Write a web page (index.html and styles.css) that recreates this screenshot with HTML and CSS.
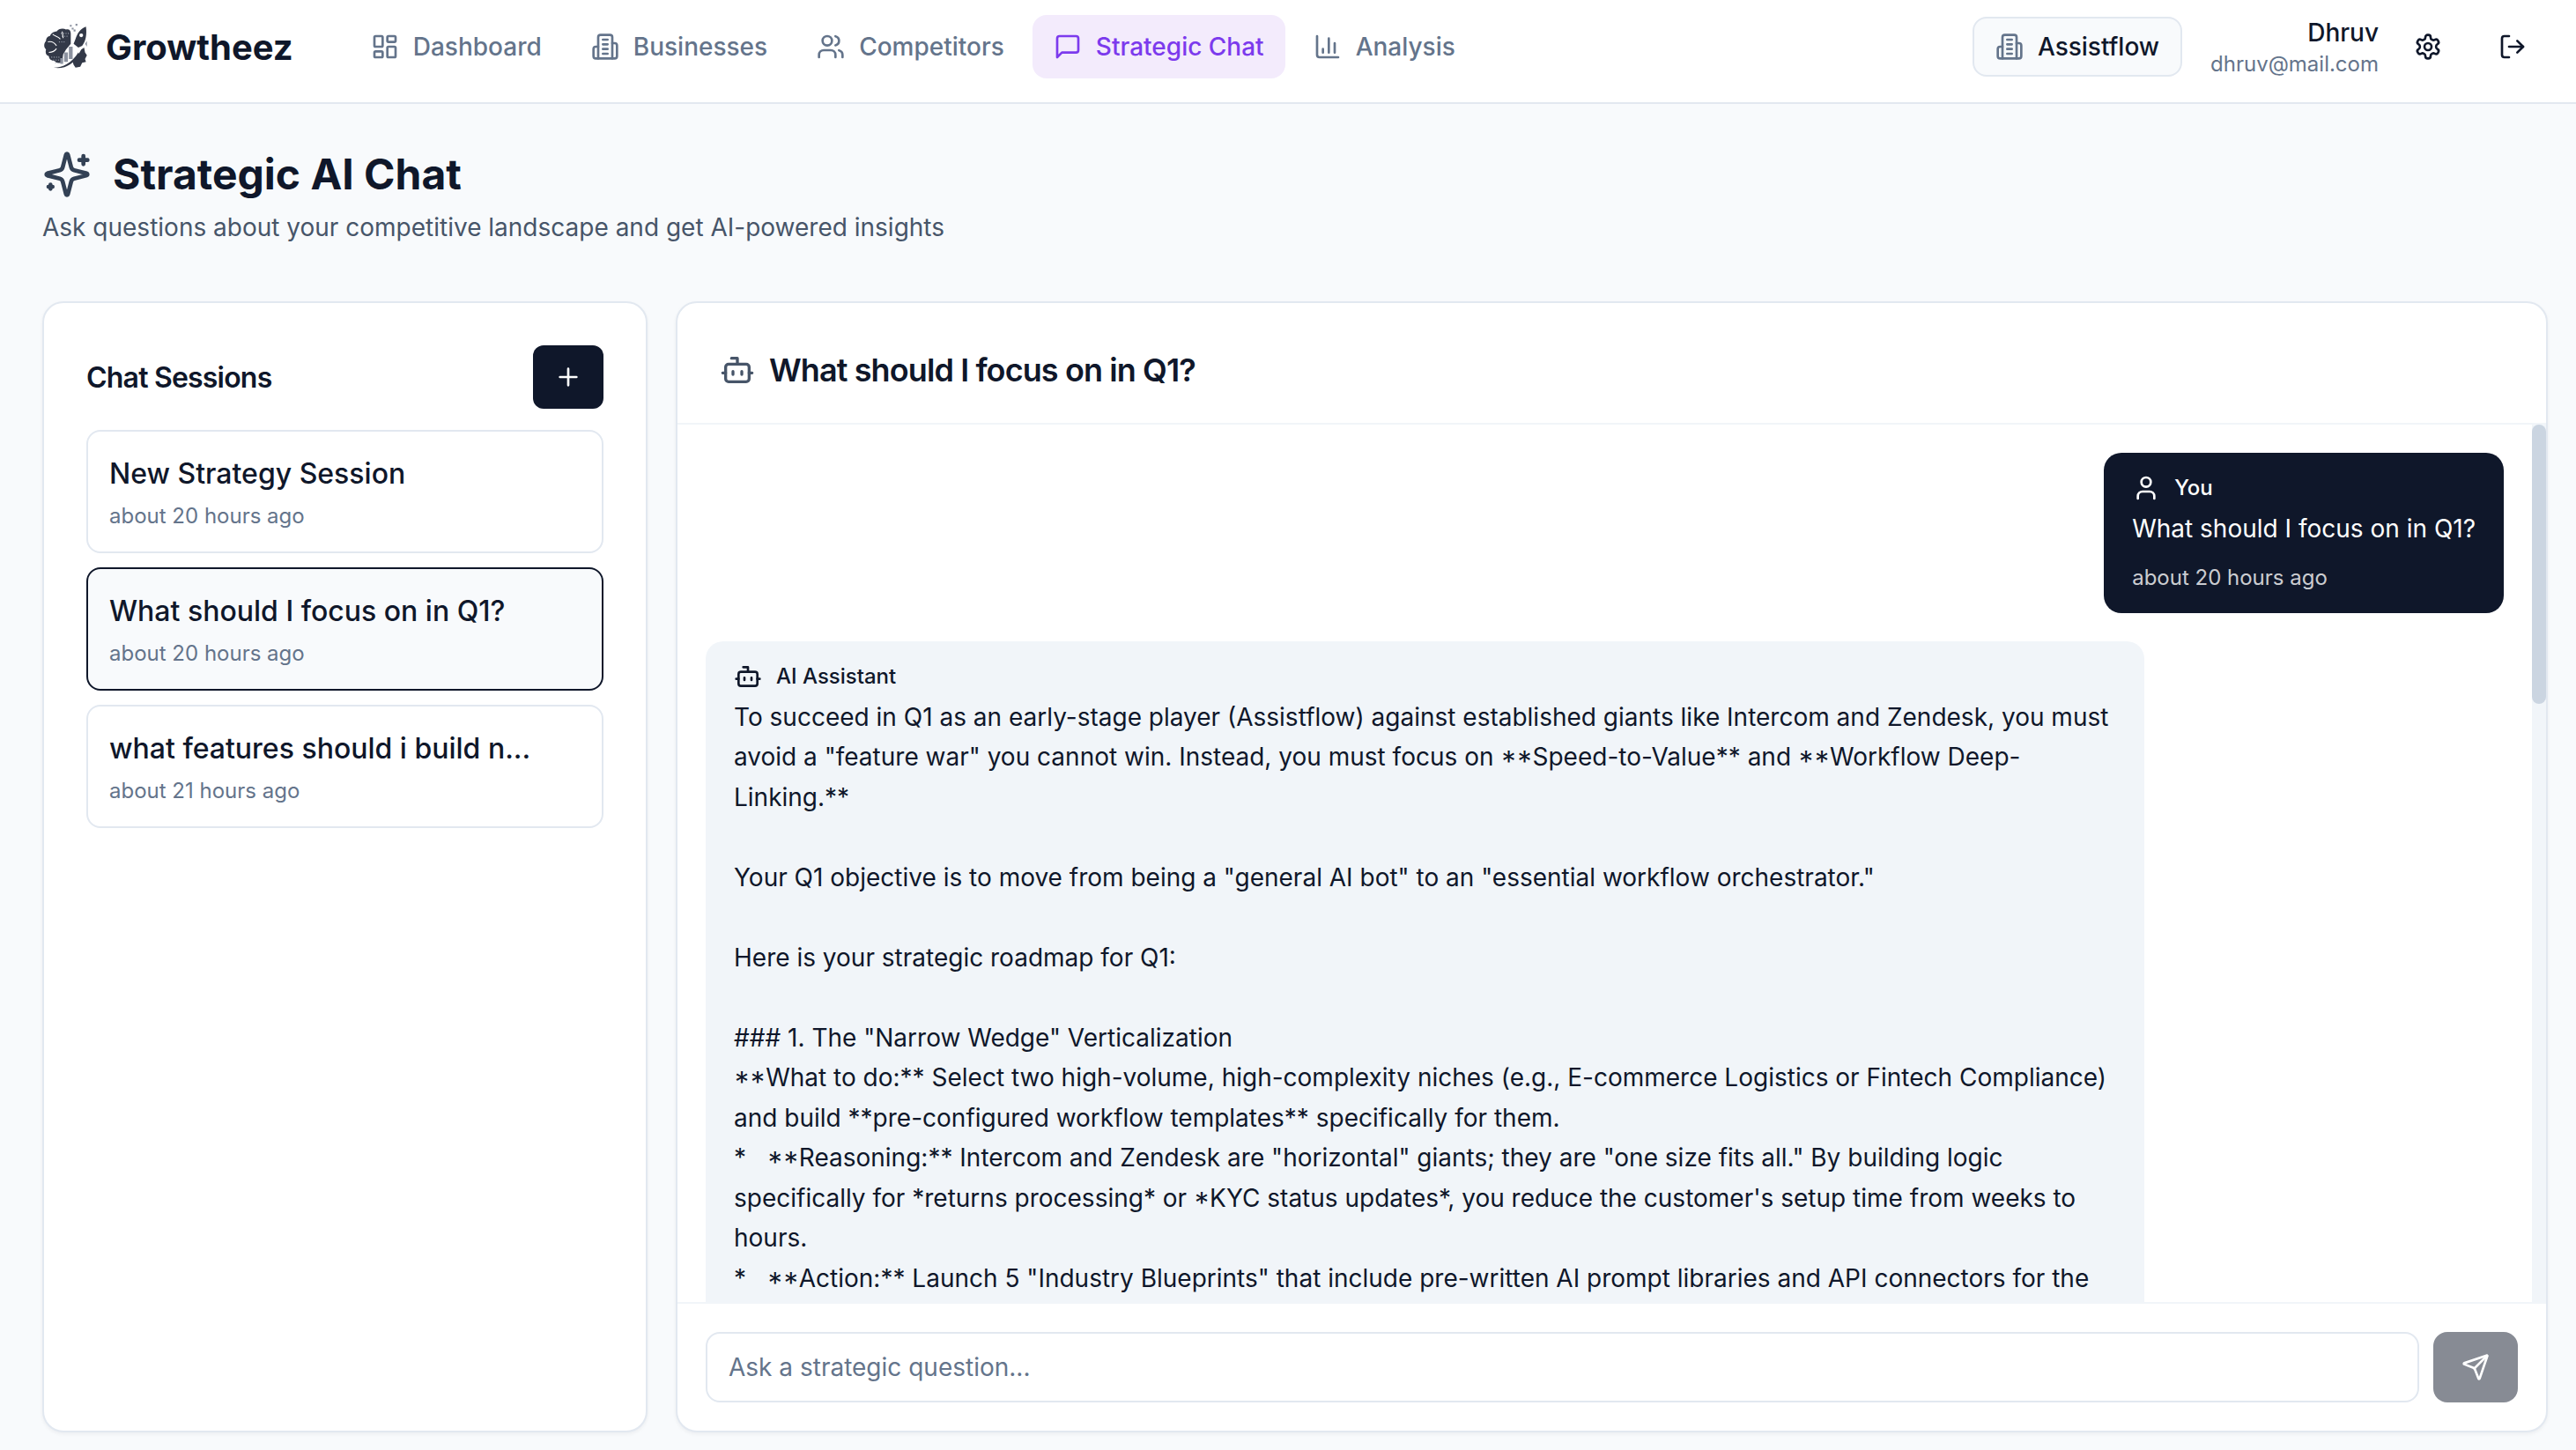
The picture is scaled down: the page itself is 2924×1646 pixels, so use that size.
FILE: index.html
```html
<!DOCTYPE html>
<html lang="en">
<head>
  <meta charset="UTF-8">
  <title>Growtheez - Strategic AI Chat</title>
  <link rel="stylesheet" href="styles.css">
</head>
<body>
  <header class="topbar">
    <div class="brand">
      <svg class="brand-mark" viewBox="0 0 48 50">
        <!-- brain -->
        <path fill="#333948" d="M13 9c2-3 7-4 10-2 3-1 5 1 5 4v11l-5 6-3 5-1 8c-3 2-6 1-8-1-3 0-6-2-6-5-3-1-4-4-3-7-3-3-2-7 0-9 0-3 2-5 4-5 1-3 4-5 7-5z"/>
        <path fill="none" stroke="#fff" stroke-width="1" d="M4 20c4-1 7 1 9 4M9 12c2 2 6 2 8 5M5 31c3 0 6-1 8-4M19 9l1 7"/>
        <path fill="none" stroke="#aab0bc" stroke-width="1" stroke-linecap="round" stroke-dasharray="0.1 2.4" d="M18 11h8M19 14h7M8 36h8M10 39h7M12 42h6M16 20h6"/>
        <!-- bars -->
        <path fill="#8c92a0" d="M17 37h3v6h-3zM21 31h4v10h-4zM26 25h4v13h-4z"/>
        <!-- swoosh -->
        <path fill="#333948" d="M10 47c10 0 19-5 26-16l1 2c-6 10-15 16-27 14z"/>
        <!-- rocket and gear -->
        <path fill="#333948" d="M44 4c-6 2-9 7-11 13l-2 5 5 4 4-2c4-5 5-12 4-20z"/>
        <path fill="#333948" d="M39 28l3-2 1 5 2 3-2 4 1 3-4 1-2 4-5 1-2-3-1-3 5-6z"/>
        <circle cx="39" cy="13" r="2" fill="#fff"/>
        <path fill="#8c92a0" d="M31 7h2v2h-2zM33 1h2v2h-2zM27 2h2v2h-2zM29 5h2v2h-2zM43 22l2-3v6z"/>
      </svg>
      <span class="brand-name">Growtheez</span>
    </div>
    <nav class="nav">
      <a class="nav-item">
        <svg class="icon" viewBox="0 0 24 24"><rect x="3" y="3" width="7" height="9" rx="1"/><rect x="14" y="3" width="7" height="5" rx="1"/><rect x="14" y="12" width="7" height="9" rx="1"/><rect x="3" y="16" width="7" height="5" rx="1"/></svg>
        Dashboard
      </a>
      <a class="nav-item">
        <svg class="icon" viewBox="0 0 24 24"><path d="M6 22V4a2 2 0 0 1 2-2h8a2 2 0 0 1 2 2v18Z"/><path d="M6 12H4a2 2 0 0 0-2 2v6a2 2 0 0 0 2 2h2"/><path d="M18 9h2a2 2 0 0 1 2 2v9a2 2 0 0 1-2 2h-2"/><path d="M10 6h4M10 10h4M10 14h4M10 18h4"/></svg>
        Businesses
      </a>
      <a class="nav-item">
        <svg class="icon" viewBox="0 0 24 24"><path d="M16 21v-2a4 4 0 0 0-4-4H6a4 4 0 0 0-4 4v2"/><circle cx="9" cy="7" r="4"/><path d="M22 21v-2a4 4 0 0 0-3-3.87"/><path d="M16 3.13a4 4 0 0 1 0 7.75"/></svg>
        Competitors
      </a>
      <a class="nav-item active">
        <svg class="icon" viewBox="0 0 24 24"><path d="M21 15a2 2 0 0 1-2 2H7l-4 4V5a2 2 0 0 1 2-2h14a2 2 0 0 1 2 2z"/></svg>
        Strategic Chat
      </a>
      <a class="nav-item">
        <svg class="icon" viewBox="0 0 24 24"><path d="M3 3v16a2 2 0 0 0 2 2h16"/><path d="M18 17V9M13 17V5M8 17v-3"/></svg>
        Analysis
      </a>
    </nav>
    <div class="account">
      <button class="workspace">
        <svg class="icon muted" viewBox="0 0 24 24"><path d="M6 22V4a2 2 0 0 1 2-2h8a2 2 0 0 1 2 2v18Z"/><path d="M6 12H4a2 2 0 0 0-2 2v6a2 2 0 0 0 2 2h2"/><path d="M18 9h2a2 2 0 0 1 2 2v9a2 2 0 0 1-2 2h-2"/><path d="M10 6h4M10 10h4M10 14h4M10 18h4"/></svg>
        Assistflow
      </button>
      <div class="user">
        <div class="user-name">Dhruv</div>
        <div class="user-mail">dhruv@mail.com</div>
      </div>
      <div class="account-actions">
        <button class="icon-btn">
          <svg class="icon" viewBox="0 0 24 24"><path d="M12.22 2h-.44a2 2 0 0 0-2 2v.18a2 2 0 0 1-1 1.73l-.43.25a2 2 0 0 1-2 0l-.15-.08a2 2 0 0 0-2.73.73l-.22.38a2 2 0 0 0 .73 2.73l.15.1a2 2 0 0 1 1 1.72v.51a2 2 0 0 1-1 1.74l-.15.09a2 2 0 0 0-.73 2.73l.22.38a2 2 0 0 0 2.73.73l.15-.08a2 2 0 0 1 2 0l.43.25a2 2 0 0 1 1 1.73V20a2 2 0 0 0 2 2h.44a2 2 0 0 0 2-2v-.18a2 2 0 0 1 1-1.73l.43-.25a2 2 0 0 1 2 0l.15.08a2 2 0 0 0 2.73-.73l.22-.39a2 2 0 0 0-.73-2.73l-.15-.08a2 2 0 0 1-1-1.74v-.5a2 2 0 0 1 1-1.74l.15-.09a2 2 0 0 0 .73-2.73l-.22-.38a2 2 0 0 0-2.73-.73l-.15.08a2 2 0 0 1-2 0l-.43-.25a2 2 0 0 1-1-1.73V4a2 2 0 0 0-2-2z"/><circle cx="12" cy="12" r="3"/></svg>
        </button>
        <button class="icon-btn">
          <svg class="icon" viewBox="0 0 24 24"><path d="M9 21H5a2 2 0 0 1-2-2V5a2 2 0 0 1 2-2h4"/><path d="M16 17l5-5-5-5"/><path d="M21 12H9"/></svg>
        </button>
      </div>
    </div>
  </header>

  <main class="page">
    <h1 class="page-title">
      <svg class="icon title-icon" viewBox="0 0 24 24"><path d="M9.937 15.5A2 2 0 0 0 8.5 14.063l-6.135-1.582a.5.5 0 0 1 0-.962L8.5 9.936A2 2 0 0 0 9.937 8.5l1.582-6.135a.5.5 0 0 1 .963 0L14.063 8.5A2 2 0 0 0 15.5 9.937l6.135 1.581a.5.5 0 0 1 0 .964L15.5 14.063a2 2 0 0 0-1.437 1.437l-1.582 6.135a.5.5 0 0 1-.963 0z"/><path d="M20 3v4M22 5h-4M4 17v2M5 18H3"/></svg>
      Strategic AI Chat
    </h1>
    <p class="page-sub">Ask questions about your competitive landscape and get AI-powered insights</p>

    <div class="columns">
      <aside class="card sessions">
        <div class="sessions-head">
          <h2>Chat Sessions</h2>
          <button class="add-btn">
            <svg class="icon" viewBox="0 0 24 24"><path d="M5 12h14M12 5v14"/></svg>
          </button>
        </div>
        <div class="session">
          <div class="session-title">New Strategy Session</div>
          <div class="session-time">about 20 hours ago</div>
        </div>
        <div class="session selected">
          <div class="session-title">What should I focus on in Q1?</div>
          <div class="session-time">about 20 hours ago</div>
        </div>
        <div class="session">
          <div class="session-title">what features should i build n...</div>
          <div class="session-time">about 21 hours ago</div>
        </div>
      </aside>

      <section class="card chat">
        <div class="chat-head">
          <svg class="icon chat-head-icon" viewBox="0 0 24 24"><path d="M12 8V4H8"/><rect x="4" y="8" width="16" height="12" rx="2"/><path d="M2 14h2M20 14h2M15 13v2M9 13v2"/></svg>
          <h2>What should I focus on in Q1?</h2>
        </div>
        <div class="chat-body">
          <div class="messages">
            <div class="msg msg-user">
              <div class="msg-who">
                <svg class="icon" viewBox="0 0 24 24"><path d="M19 21v-2a4 4 0 0 0-4-4H9a4 4 0 0 0-4 4v2"/><circle cx="12" cy="7" r="4"/></svg>
                You
              </div>
              <div class="msg-text">What should I focus on in Q1?</div>
              <div class="msg-time">about 20 hours ago</div>
            </div>
            <div class="msg msg-ai">
              <div class="msg-who">
                <svg class="icon" viewBox="0 0 24 24"><path d="M12 8V4H8"/><rect x="4" y="8" width="16" height="12" rx="2"/><path d="M2 14h2M20 14h2M15 13v2M9 13v2"/></svg>
                AI Assistant
              </div>
              <div class="msg-text">To succeed in Q1 as an early-stage player (Assistflow) against established giants like Intercom and Zendesk, you must avoid a "feature war" you cannot win. Instead, you must focus on <span class="caps-mark">**</span>Speed-to-Value** and <span class="caps-mark">**</span>Workflow Deep-Linking.**

Your Q1 objective is to move from being a "general AI bot" to an "essential workflow orchestrator."

Here is your strategic roadmap for Q1:

### 1. The "Narrow Wedge" Verticalization
<span class="caps-mark">**</span>What to do:** Select two high-volume, high-complexity niches (e.g., E-commerce Logistics or Fintech Compliance) and build **pre-configured workflow templates** specifically for them.
*   <span class="caps-mark">**</span>Reasoning:** Intercom and Zendesk are "horizontal" giants; they are "one size fits all." By building logic specifically for *returns processing* or <span class="caps-mark">*</span>KYC status updates*, you reduce the customer's setup time from weeks to hours.
*   <span class="caps-mark">**</span>Action:** Launch 5 "Industry Blueprints" that include pre-written AI prompt libraries and API connectors for the</div>
            </div>
          </div>
          <div class="scroll-track"><div class="scroll-thumb"></div></div>
        </div>
        <form class="composer">
          <input class="composer-input" type="text" placeholder="Ask a strategic question...">
          <button class="send-btn" type="button">
            <svg class="icon" viewBox="0 0 24 24"><path d="M14.536 21.686a.5.5 0 0 0 .937-.024l6.5-19a.496.496 0 0 0-.635-.635l-19 6.5a.5.5 0 0 0-.024.937l7.93 3.18a2 2 0 0 1 1.112 1.11z"/><path d="m21.854 2.147-10.94 10.939"/></svg>
          </button>
        </form>
      </section>
    </div>
  </main>
</body>
</html>
```

FILE: styles.css
```css
* { box-sizing: border-box; }

html, body {
  height: 100%;
}

body {
  margin: 0;
  display: flex;
  flex-direction: column;
  overflow: hidden;
  background-color: #f8fafc;
  color: #0f172a;
  font-family: Inter, "Liberation Sans", sans-serif;
  font-size: 28px;
}

button {
  font-family: inherit;
  border: none;
  background: none;
  padding: 0;
  color: inherit;
}

.icon {
  width: 32px;
  height: 32px;
  flex: none;
  fill: none;
  stroke: currentColor;
  stroke-width: 2;
  stroke-linecap: round;
  stroke-linejoin: round;
}
.icon.muted { color: #64748b; }

/* top bar */
.topbar {
  flex: none;
  display: flex;
  align-items: center;
  height: 118px;
  padding: 0 32px 10px 50px;
  background-color: #fff;
  border-bottom: 2px solid #e2e8f0;
}
.brand {
  display: flex;
  align-items: center;
  gap: 18px;
}
.brand-mark {
  width: 52px;
  height: 54px;
  flex: none;
}
.brand-name {
  font-size: 40px;
  font-weight: 700;
}
.nav {
  display: flex;
  gap: 8px;
  margin-left: 64px;
}
.nav-item {
  display: flex;
  align-items: center;
  gap: 16px;
  height: 72px;
  padding: 0 24px;
  border-radius: 16px;
  color: #64748b;
  font-weight: 500;
}
.nav-item.active {
  background-color: #f3ebfc;
  color: #7c3aed;
}
.account {
  display: flex;
  align-items: center;
  margin-left: auto;
}
.workspace {
  display: flex;
  align-items: center;
  gap: 16px;
  height: 68px;
  padding: 0 24px;
  border: 2px solid #e2e8f0;
  border-radius: 16px;
  background-color: #f8fafc;
  font-size: 28px;
  font-weight: 500;
}
.user {
  margin-left: 32px;
  text-align: right;
}
.user-name {
  font-weight: 500;
  line-height: 40px;
}
.user-mail {
  font-size: 24px;
  line-height: 32px;
  color: #64748b;
}
.account-actions {
  display: flex;
  gap: 16px;
  margin-left: 16px;
}
.icon-btn {
  display: flex;
  align-items: center;
  justify-content: center;
  width: 80px;
  height: 80px;
}

/* page */
.page {
  flex: 1;
  min-height: 0;
  display: flex;
  flex-direction: column;
  padding: 44px 32px 20px 48px;
}
.page-title {
  display: flex;
  align-items: center;
  gap: 24px;
  margin: 0;
  font-size: 48px;
  line-height: 72px;
  font-weight: 700;
}
.title-icon {
  width: 56px;
  height: 56px;
  color: #334155;
}
.page-sub {
  margin: 2px 0 62px;
  line-height: 44px;
  color: #475569;
}
.columns {
  flex: 1;
  min-height: 0;
  display: grid;
  grid-template-columns: 687px 1fr;
  gap: 32px;
}
.card {
  min-height: 0;
  background-color: #fff;
  border: 2px solid #e2e8f0;
  border-radius: 24px;
  box-shadow: 0 2px 4px rgba(15, 23, 42, 0.05);
}

/* sessions */
.sessions {
  padding: 48px;
  display: flex;
  flex-direction: column;
  gap: 16px;
}
.sessions-head {
  display: flex;
  align-items: center;
  justify-content: space-between;
  margin-bottom: 8px;
}
.sessions-head h2 {
  margin: 0;
  font-size: 32px;
  font-weight: 600;
  letter-spacing: -0.8px;
}
.add-btn {
  display: flex;
  align-items: center;
  justify-content: center;
  width: 80px;
  height: 72px;
  border-radius: 12px;
  background-color: #0f172a;
  color: #fff;
}
.session {
  padding: 24px;
  border: 2px solid #e2e8f0;
  border-radius: 16px;
}
.session.selected {
  border-color: #0f172a;
  background-color: #f8fafc;
}
.session-title {
  font-size: 32px;
  line-height: 48px;
  font-weight: 500;
  margin-bottom: 8px;
}
.session-time {
  font-size: 24px;
  line-height: 32px;
  color: #64748b;
}

/* chat */
.chat {
  display: flex;
  flex-direction: column;
  overflow: hidden;
}
.chat-head {
  flex: none;
  display: flex;
  align-items: center;
  gap: 16px;
  height: 138px;
  padding: 16px 48px 0;
  border-bottom: 2px solid #f1f5f9;
}
.chat-head h2 {
  margin: 0;
  font-size: 36px;
  font-weight: 600;
  letter-spacing: -0.9px;
}
.chat-head-icon {
  width: 40px;
  height: 40px;
  color: #475569;
}
.chat-body {
  flex: 1;
  min-height: 0;
  display: flex;
}
.messages {
  flex: 1;
  min-width: 0;
  overflow: hidden;
  display: flex;
  flex-direction: column;
  align-items: flex-start;
  gap: 32px;
  padding: 32px;
}
.scroll-track {
  flex: none;
  width: 16px;
  background-color: #f1f5f9;
}
.scroll-thumb {
  height: 317px;
  border-radius: 8px;
  background-color: #cbd5e1;
}
.msg {
  flex: none;
  max-width: 80%;
  padding: 24px 32px;
  border-radius: 20px;
}
.msg-who {
  display: flex;
  align-items: center;
  gap: 16px;
  font-size: 24px;
  line-height: 32px;
  font-weight: 500;
  margin-bottom: 8px;
}
.msg-text {
  line-height: 45.5px;
  white-space: pre-wrap;
}
/* asterisks in front of a capital sit at cap height */
.caps-mark {
  font-feature-settings: "case";
}
.msg-time {
  margin-top: 16px;
  font-size: 24px;
  line-height: 32px;
  color: rgba(255, 255, 255, 0.8);
}
.msg-user {
  align-self: flex-end;
  background-color: #0f172a;
  color: #fff;
}
.msg-ai {
  width: 80%;
  min-height: 2852px;
  background-color: #f1f5f9;
}
.composer {
  flex: none;
  display: flex;
  gap: 16px;
  padding: 32px;
  border-top: 2px solid #f1f5f9;
}
.composer-input {
  flex: 1;
  height: 80px;
  padding: 0 24px;
  border: 2px solid #e2e8f0;
  border-radius: 16px;
  background-color: #fff;
  color: #0f172a;
  font-family: inherit;
  font-size: 28px;
}
.composer-input::placeholder { color: #64748b; }
.send-btn {
  display: flex;
  align-items: center;
  justify-content: center;
  width: 96px;
  height: 80px;
  border-radius: 16px;
  background-color: #878b94;
  color: #fff;
}
```
